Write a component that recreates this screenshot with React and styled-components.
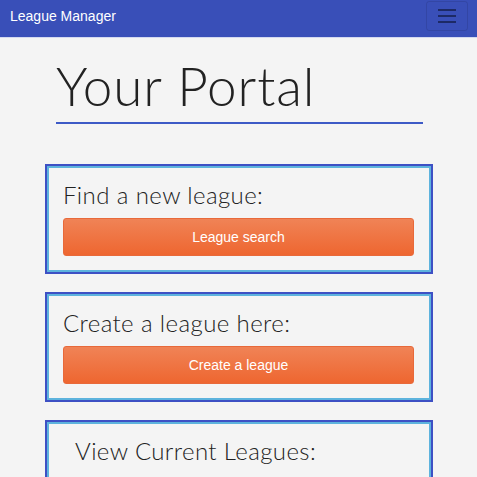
import React from 'react'
import styled, { createGlobalStyle } from 'styled-components';

const GlobalStyle = createGlobalStyle`
  body {
    margin: 0;
    background: #f4f4f4;
    font-family: 'Liberation Sans', Arial, sans-serif;
  }
`;

const cards = [
  { title: 'Find a new league:', action: 'League search' },
  { title: 'Create a league here:', action: 'Create a league' },
  { title: 'View Current Leagues:', indent: true },
];

export default function App() {
  return (
    <>
      <GlobalStyle />
      <NavBar>
        <Brand>League Manager</Brand>
        <Toggler aria-label="menu">
          <TogglerLine />
          <TogglerLine />
          <TogglerLine />
        </Toggler>
      </NavBar>

      <PageContainer>
        <TitleBlock>
          <PageTitle>Your Portal</PageTitle>
        </TitleBlock>

        {cards.map((card) => (
          <Card key={card.title}>
            <CardTitle $indent={card.indent}>{card.title}</CardTitle>
            {card.action && <ActionButton>{card.action}</ActionButton>}
          </Card>
        ))}
      </PageContainer>
    </>
  )
}

const NavBar = styled.nav`
  display: flex;
  align-items: flex-start;
  justify-content: space-between;
  height: 37px;
  background-color: #394fb8;
  border-bottom: 1px solid #d3d9f0;
  padding: 0 9px 0 10px;
`;

const Brand = styled.div`
  color: #fff;
  font-size: 14px;
  line-height: 16px;
  margin-top: 8px;
`;

const Toggler = styled.button`
  display: flex;
  flex-direction: column;
  align-items: center;
  justify-content: center;
  gap: 4px;
  width: 42px;
  height: 30px;
  margin-top: 1px;
  padding: 0;
  background: transparent;
  border: 1px solid rgba(0, 0, 0, 0.1);
  border-radius: 3px;
`;

const TogglerLine = styled.span`
  display: block;
  width: 18px;
  height: 2px;
  background: #1d2a66;
`;

const PageContainer = styled.main`
  display: flex;
  flex-direction: column;
  gap: 18px;
  padding: 0 44px 0 45px;
`;

const TitleBlock = styled.div`
  margin: 0 10px 22px 11px;
  border-bottom: 2px solid #3d5ac6;
  padding-top: 16px;
  padding-bottom: 4px;
`;

const PageTitle = styled.h1`
  margin: 0;
  font-family: Lato, 'Open Sans', sans-serif;
  font-weight: 300;
  font-size: 53px;
  letter-spacing: 0.9px;
  line-height: 64px;
  color: #222;
`;

const Card = styled.section`
  display: flex;
  flex-direction: column;
  box-sizing: border-box;
  min-height: 110px;
  padding: 14px 17px 16px 16px;
  border: 2px solid #3d50c4;
  box-shadow: inset 0 0 0 2px #5db3dd;
`;

const CardTitle = styled.h2`
  margin: 0 0 9px ${(p) => (p.$indent ? '12px' : '0')};
  font-family: Lato, 'Open Sans', sans-serif;
  font-weight: 300;
  font-size: 24px;
  letter-spacing: 0.4px;
  line-height: 29px;
  color: #222;
`;

const ActionButton = styled.button`
  height: 38px;
  border: 1px solid #e8693a;
  border-radius: 3px;
  background: linear-gradient(#f08356, #ee6630);
  color: #fff;
  font-family: 'Liberation Sans', Arial, sans-serif;
  font-size: 14px;
  cursor: pointer;
`;
